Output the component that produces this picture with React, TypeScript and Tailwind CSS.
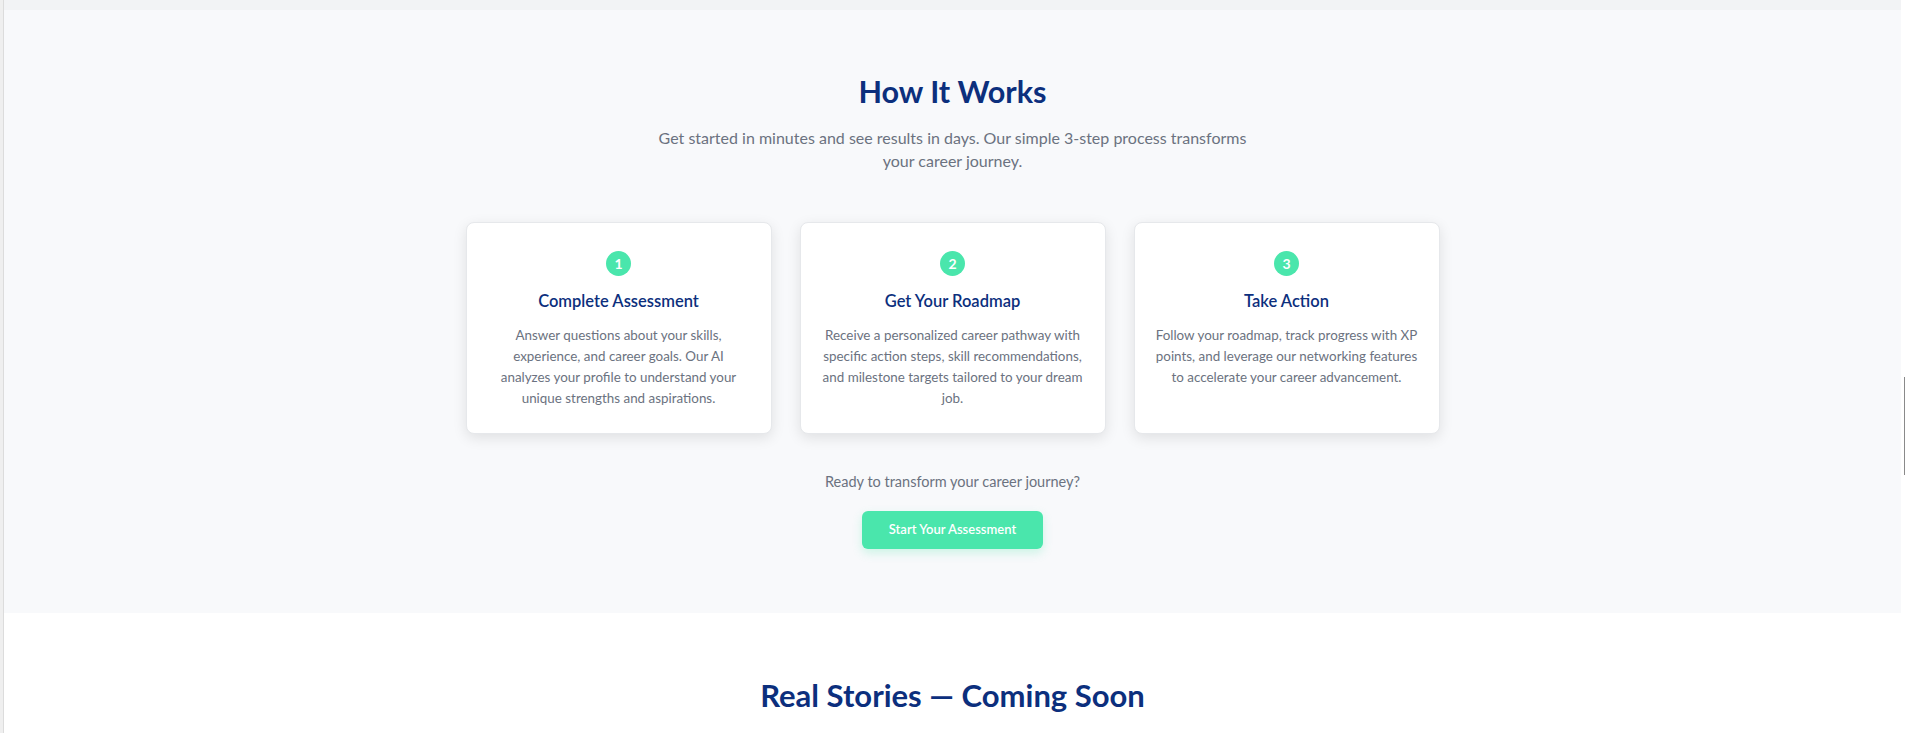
import React from "react";

const steps = [
  {
    n: "1",
    title: "Complete Assessment",
    lines: [
      "Answer questions about your skills,",
      "experience, and career goals. Our AI",
      "analyzes your profile to understand your",
      "unique strengths and aspirations.",
    ],
  },
  {
    n: "2",
    title: "Get Your Roadmap",
    lines: [
      "Receive a personalized career pathway with",
      "specific action steps, skill recommendations,",
      "and milestone targets tailored to your dream",
      "job.",
    ],
  },
  {
    n: "3",
    title: "Take Action",
    lines: [
      "Follow your roadmap, track progress with XP",
      "points, and leverage our networking features",
      "to accelerate your career advancement.",
    ],
  },
];

export default function App() {
  return (
    <div className="relative flex min-h-screen bg-white font-['Segoe_UI','Lato',sans-serif]">
      <div className="w-[4px] shrink-0 bg-[#efefef] border-r border-[#dcdcdc]" />
      <main className="flex-1 flex flex-col pr-[4px]">
        <div className="h-[10px] bg-[#f2f3f5]" />
        <section className="bg-[#f8f9fb] pt-16 pb-16 flex flex-col items-center">
          <h2 className="text-[30.6px] leading-[36px] font-bold text-[#0c2f7d] text-center">
            How It Works
          </h2>
          <p className="mt-4 text-center text-[16px] leading-[23px] text-[#6b7280]">
            <span className="whitespace-nowrap">
              Get started in minutes and see results in days. Our simple 3-step process transforms
            </span>
            <br />
            your career journey.
          </p>
          <div className="mt-[50px] grid w-[974px] grid-cols-3 gap-7">
            {steps.map((s) => (
              <div
                key={s.n}
                className="flex flex-col items-center rounded-lg border border-[#e6e8eb] bg-white px-6 pt-7 pb-6 shadow-[0_4px_14px_rgba(0,0,0,0.1)]"
              >
                <div className="flex h-[25px] w-[25px] items-center justify-center rounded-full bg-[#4ae6ac] text-[14px] font-bold text-white">
                  {s.n}
                </div>
                <h3 className="mt-[11px] text-[16.5px] leading-[28px] font-semibold text-[#0c2f7d]">
                  {s.title}
                </h3>
                <p className="mt-[10px] text-center text-[13.4px] leading-[21px] text-[#6b7280]">
                  {s.lines.map((l, i) => (
                    <span key={i} className="block whitespace-nowrap">
                      {l}
                    </span>
                  ))}
                </p>
              </div>
            ))}
          </div>
          <p className="mt-9 text-[14.5px] leading-[24px] text-[#6b7280]">
            Ready to transform your career journey?
          </p>
          <button className="mt-[17px] h-[38px] rounded-md bg-[#4ae6ac] px-[27px] text-[13px] font-semibold text-white shadow-[0_4px_10px_rgba(74,230,172,0.25)]">
            Start Your Assessment
          </button>
        </section>
        <section className="bg-white pt-16 pb-16 flex flex-col items-center">
          <h2 className="text-[31px] leading-[36px] font-bold text-[#0c2f7d] text-center">
            Real Stories — Coming Soon
          </h2>
        </section>
      </main>
      <div className="absolute right-0 top-[377px] h-[98px] w-px bg-[#8a8a8a]" />
    </div>
  );
}
